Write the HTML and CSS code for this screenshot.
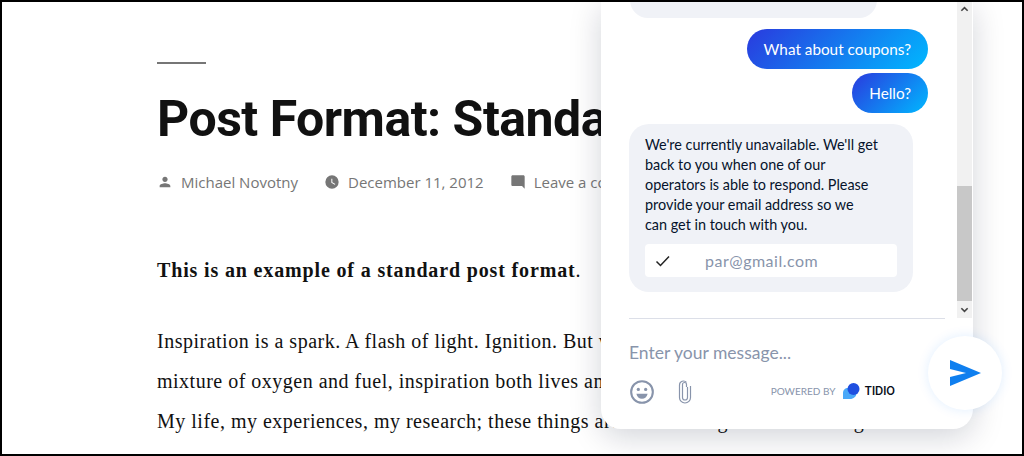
FILE: index.html
```
<!DOCTYPE html>
<html lang="en">
<head>
<meta charset="utf-8">
<title>Post Format: Standard</title>
<link rel="stylesheet" href="styles.css">
</head>
<body>
<div class="frame">
  <main class="post">
    <div class="rule"></div>
    <h1 class="title">Post Format: Standard</h1>
    <div class="meta">
      <span class="meta-item"><svg class="meta-icon" viewBox="0 0 24 24"><path d="M12 12c2.21 0 4-1.79 4-4s-1.79-4-4-4-4 1.79-4 4 1.79 4 4 4zm0 2c-2.67 0-8 1.34-8 4v2h16v-2c0-2.66-5.33-4-8-4z"/></svg>Michael Novotny</span>
      <span class="meta-item"><svg class="meta-icon" viewBox="0 0 24 24"><path d="M12 2a10 10 0 1 0 0 20 10 10 0 0 0 0-20zm4.2 14.2L11 13V7h1.5v5.2l4.5 2.7-.8 1.3z"/></svg>December 11, 2012</span>
      <span class="meta-item"><svg class="meta-icon" viewBox="0 0 24 24"><path d="M20 2H4c-1.1 0-2 .9-2 2v12c0 1.1.9 2 2 2h14l4 4V4c0-1.1-.9-2-2-2z"/></svg>Leave a comment</span>
    </div>
    <p class="lead"><strong>This is an example of a standard post format</strong>.</p>
    <p class="body-text">Inspiration is a spark. A flash of light. Ignition. But what keeps it burning? Like a<br>mixture of oxygen and fuel, inspiration both lives and dies by what it is fed each day.<br>My life, my experiences, my research; these things are the kindling for the next big<br>idea, ones which burn within me. Some ideas take root and slowly grow over time. Some</p>
  </main>

  <aside class="chat">
    <div class="chat-top">
      <div class="messages">
        <div class="bubble-stub"></div>
        <div class="bubble-out first">What about coupons?</div>
        <div class="bubble-out">Hello?</div>
        <div class="bubble-in">
          <p class="bubble-text">We're currently unavailable. We'll get<br>back to you when one of our<br>operators is able to respond. Please<br>provide your email address so we<br>can get in touch with you.</p>
          <div class="email">
            <svg class="check" viewBox="0 0 16 16"><path d="M1.5 8.5 5.5 12.5 14 3.5"/></svg>
            <span>par@gmail.com</span>
          </div>
        </div>
      </div>
      <div class="scrollbar">
        <div class="arrow"><svg viewBox="0 0 10 6"><path d="M1.5 5 5 1.5 8.5 5"/></svg></div>
        <div class="thumb"></div>
        <div class="arrow"><svg viewBox="0 0 10 6"><path d="M1.5 1 5 4.5 8.5 1"/></svg></div>
      </div>
    </div>
    <div class="composer">
      <div class="placeholder">Enter your message...</div>
      <div class="tools">
        <svg class="tool smile" viewBox="0 0 24 24"><circle cx="12" cy="12" r="10"/><circle class="fill" cx="8.6" cy="9.6" r="1.5"/><circle class="fill" cx="15.4" cy="9.6" r="1.5"/><path class="fill" d="M6.8 13.6h10.4c-.5 2.8-2.6 4.6-5.2 4.6s-4.700-1.800-5.200-4.600z"/></svg>
        <svg class="tool clip" viewBox="0 0 14 24"><path d="M9.500 7v10.500a2.500 2.500 0 0 1-5 0V4.500a2 2 0 0 1 4 0V7"/><path d="M12.500 6v11.500a5.500 5.500 0 0 1-11 0V5a4 4 0 0 1 7-2.600"/></svg>
        <div class="brand">
          <span class="powered">POWERED BY</span>
          <svg class="logo" viewBox="0 0 17 16"><path class="logo-light" d="M0 16V10C0 7 2 5 5 5h4c3 0 4.500 2 4.500 5 0 3.500-3 6-6.500 6z"/><circle class="logo-dark" cx="10.500" cy="6" r="6"/></svg>
          <span class="tidio">TIDIO</span>
        </div>
      </div>
    </div>
    <button class="send" type="button" aria-label="Send"><svg viewBox="0 0 31 26"><path d="M0 0 31 13 0 26V17L16 13 0 9z"/></svg></button>
  </aside>
</div>
</body>
</html>
```
FILE: styles.css
```
* { box-sizing: border-box; }
html, body { margin: 0; padding: 0; background: #fff; }
.frame {
  position: relative;
  width: 1024px;
  height: 456px;
  border: 2px solid #000;
  overflow: hidden;
  background: #fff;
}
.post { width: 720px; padding: 60px 0 0 155px; }
.rule { width: 49px; height: 2px; background: #767676; }
.title {
  margin: 25px 0 0;
  font: 700 50px/60px Roboto, sans-serif;
  letter-spacing: -.5px;
  color: #111;
  white-space: nowrap;
}
.meta {
  display: flex;
  gap: 26px;
  margin-top: 23px;
  font: 15px/20px "Open Sans", sans-serif;
  color: #767676;
  white-space: nowrap;
}
.meta-item { display: flex; align-items: center; }
.meta-icon { width: 16px; height: 16px; margin-right: 8px; fill: #767676; }
.lead, .body-text {
  margin: 0;
  font: 20px/40px "Liberation Serif", serif;
  color: #111;
  white-space: nowrap;
}
.lead { margin-top: 58px; }
.lead strong { letter-spacing: .85px; }
.body-text { margin-top: 31px; letter-spacing: .5px; }

.chat {
  position: absolute;
  left: 599px;
  top: -2px;
  width: 372px;
  height: 429px;
  display: flex;
  flex-direction: column;
  background: #fff;
  border-radius: 0 0 20px 20px;
  box-shadow: 0 8px 32px rgba(0, 18, 46, .18);
  font-family: Lato, sans-serif;
}
.chat-top { display: flex; height: 318px; }
.messages {
  flex: 1;
  min-width: 0;
  padding: 0 29px 26px 28px;
  display: flex;
  flex-direction: column;
  justify-content: flex-end;
  align-items: flex-end;
  overflow: hidden;
}
.bubble-stub {
  width: 247px;
  height: 18px;
  flex: none;
  align-self: flex-start;
  margin-left: 1px;
  background: #f0f2f7;
  border-radius: 0 0 20px 20px;
}
.bubble-out {
  flex: none;
  margin-top: 4px;
  height: 40px;
  padding: 0 17px;
  display: flex;
  align-items: center;
  border-radius: 20px;
  background: linear-gradient(135deg, #2a3ade, #00b8ff);
  color: #fff;
  font-size: 15.300px;
}
.bubble-out.first { margin-top: 11px; }
.bubble-in {
  flex: none;
  align-self: flex-start;
  width: 284px;
  margin-top: 11px;
  padding: 11px 16px 15px;
  background: #f0f2f7;
  border-radius: 20px;
}
.bubble-text { margin: 0; font-size: 14.400px; line-height: 20px; color: #06132b; }
.email {
  display: flex;
  align-items: center;
  height: 33px;
  margin-top: 9px;
  padding-left: 10px;
  background: #fff;
  border-radius: 4px;
  font-size: 16px;
  letter-spacing: .5px;
  color: #8894ab;
}
.check { width: 16px; height: 16px; margin-right: 34px; fill: none; stroke: #222; stroke-width: 1.500; }
.scrollbar {
  width: 15px;
  flex: none;
  margin-right: 1px;
  display: flex;
  flex-direction: column;
  background: #f1f1f1;
}
.arrow { height: 17px; display: flex; align-items: center; justify-content: center; }
.arrow svg { width: 9px; height: 6px; fill: none; stroke: #444; stroke-width: 1.800; }
.thumb { height: 115px; margin-top: auto; background: #c8c8c8; }

.composer { margin: 0 28px; border-top: 1px solid #dcdfe8; }
.placeholder { margin-top: 23px; font-size: 17.500px; line-height: 22px; color: #8894ab; }
.tools { display: flex; align-items: center; margin-top: 15px; }
.tool { fill: none; stroke: #8894ab; }
.smile { width: 26px; height: 26px; stroke-width: 1.900; }
.fill { fill: #8894ab; stroke: none; }
.clip { width: 14px; height: 24px; margin-left: 23px; stroke-width: 1.200; }
.brand { display: flex; align-items: center; margin-left: auto; margin-right: 50px; margin-bottom: 2px; }
.powered { font-size: 10px; color: #8894ab; }
.logo { width: 17px; height: 16px; margin-left: 8px; }
.logo-light { fill: #4aa8f8; }
.logo-dark { fill: #1f4fe0; }
.tidio { margin-left: 4px; font: 600 11.300px Inter, sans-serif; color: #080f1a; }
.send {
  position: absolute;
  left: 327px;
  top: 336px;
  width: 74px;
  height: 74px;
  padding: 0;
  border: 0;
  border-radius: 50%;
  background: #fff;
  box-shadow: 0 0 12px rgba(0, 120, 255, .12);
  display: flex;
  align-items: center;
  justify-content: center;
}
.send svg { width: 31px; height: 26px; fill: #0f7fef; }
```
